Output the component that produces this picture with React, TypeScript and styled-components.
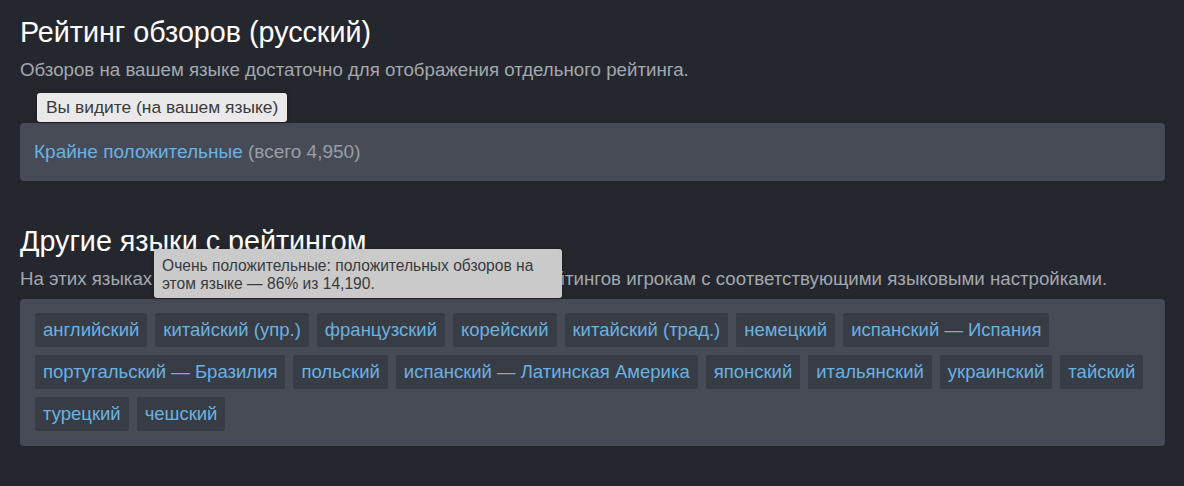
import styled, { createGlobalStyle } from "styled-components";

const GlobalStyle = createGlobalStyle`
  html, body {
    margin: 0;
    background: #25272e;
    font-family: "Liberation Sans", Arial, sans-serif;
  }
`;

const Page = styled.div`
  padding: 15px 19px 0 20px;
  width: 1145px;
`;

const Section = styled.section`
  position: relative;
  & + & {
    margin-top: 43px;
  }
`;

const Title = styled.h2`
  margin: 0;
  font-size: 28.7px;
  font-weight: normal;
  color: #ffffff;
  line-height: 34px;
`;

const Subtitle = styled.p`
  margin: 9px 0 0;
  font-size: 18.7px;
  color: #a3a7ae;
  line-height: 24px;
  white-space: nowrap;
`;

const Panel = styled.div<{ $top: number }>`
  margin-top: ${(p) => p.$top}px;
  background: #474b56;
  border-radius: 4px;
`;

const RatingPanel = styled(Panel)`
  padding: 15px 14px;
`;

const TagPanel = styled(Panel)`
  padding: 14px 15px 15px 15px;
`;

const RatingText = styled.div`
  font-size: 19px;
  line-height: 28px;
  color: #9a9ea6;
`;

const Positive = styled.span`
  color: #6ab2e2;
`;

const TagList = styled.div`
  display: flex;
  flex-wrap: wrap;
  gap: 8px 8px;
`;

const Tag = styled.span`
  background: #383c45;
  color: #6ab2e2;
  font-size: 18.5px;
  line-height: 34px;
  padding: 0 8px;
  border-radius: 2px;
`;

const Tooltip = styled.div<{ $light?: boolean }>`
  position: absolute;
  background: ${(p) => (p.$light ? "#e9e9ea" : "#cacacb")};
  color: #3a3a3c;
  border-radius: 3px;
  box-shadow: 0 0 4px rgba(0, 0, 0, 0.35);
`;

const SmallTip = styled(Tooltip)`
  left: 17px;
  top: 78px;
  height: 29px;
  line-height: 29px;
  padding: 0 9px;
  font-size: 17.4px;
  white-space: nowrap;
`;

const BigTip = styled(Tooltip)`
  left: 134px;
  top: 25px;
  width: 408px;
  height: 49px;
  box-sizing: border-box;
  padding: 8px 16px 0 8px;
  font-size: 15.6px;
  line-height: 18px;
`;

const languages = [
  "английский",
  "китайский (упр.)",
  "французский",
  "корейский",
  "китайский (трад.)",
  "немецкий",
  "испанский — Испания",
  "португальский — Бразилия",
  "польский",
  "испанский — Латинская Америка",
  "японский",
  "итальянский",
  "украинский",
  "тайский",
  "турецкий",
  "чешский",
];

const App = () => {
  return (
    <Page>
      <GlobalStyle />
      <Section>
        <Title>Рейтинг обзоров (русский)</Title>
        <Subtitle>
          Обзоров на вашем языке достаточно для отображения отдельного рейтинга.
        </Subtitle>
        <RatingPanel $top={41}>
          <RatingText>
            <Positive>Крайне положительные</Positive> (всего 4,950)
          </RatingText>
        </RatingPanel>
        <SmallTip $light>Вы видите (на вашем языке)</SmallTip>
      </Section>
      <Section>
        <Title>Другие языки с рейтингом</Title>
        <Subtitle>
          На этих языках достаточно обзоров для показа отдельных рейтингов
          игрокам с соответствующими языковыми настройками.
        </Subtitle>
        <TagPanel $top={8}>
          <TagList>
            {languages.map((l) => (
              <Tag key={l}>{l}</Tag>
            ))}
          </TagList>
        </TagPanel>
        <BigTip>
          Очень положительные: положительных обзоров на этом языке — 86% из
          14,190.
        </BigTip>
      </Section>
    </Page>
  );
};

export default App;
